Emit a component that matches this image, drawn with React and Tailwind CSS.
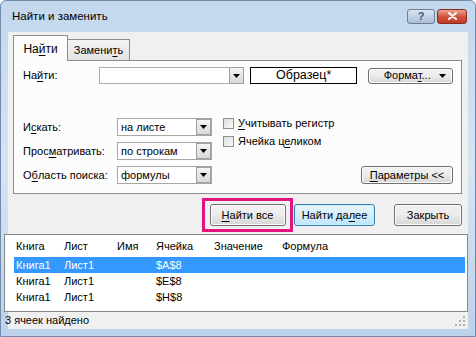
import React from "react";

const F = { fontFamily: '"Liberation Sans", Arial, sans-serif' };

function U({ children }) {
  return <span className="underline underline-offset-2">{children}</span>;
}

function Arrow() {
  return (
    <svg width="7" height="4" viewBox="0 0 7 4">
      <path d="M0 0 H7 L3.5 4 Z" fill="#000" />
    </svg>
  );
}

function DropBtn({ className }) {
  return (
    <div
      className={
        "flex items-center justify-center border border-[#a0a0a0] bg-gradient-to-b from-[#f4f4f4] to-[#d8d8d8] " +
        className
      }
    >
      <Arrow />
    </div>
  );
}

function Select({ value }) {
  return (
    <div className="flex h-[18px] w-[95px] border border-[#a7a7a7] bg-white">
      <div className="flex flex-1 items-center pl-[3px] text-[11px] leading-none text-black">{value}</div>
      <DropBtn className="w-[15px] h-full" />
    </div>
  );
}

function Check({ children }) {
  return (
    <div className="flex items-center gap-[4px] whitespace-nowrap text-[11px] leading-none">
      <div className="h-[11px] w-[11px] border border-[#8e8f8f] bg-gradient-to-br from-[#dcdcdc] to-[#fafafa]" />
      <span>{children}</span>
    </div>
  );
}

function Btn({ children, className = "", def = false }) {
  return (
    <div
      className={
        "flex items-center justify-center whitespace-nowrap rounded-[3px] border text-[11px] leading-none text-black " +
        (def
          ? "border-[#3c7fb1] bg-gradient-to-b from-[#eaf6fd] to-[#bee6fd] shadow-[inset_0_0_0_1px_#c8f0ff]"
          : "border-[#707070] bg-gradient-to-b from-[#f2f2f2] via-[#ebebeb] to-[#d6d6d6] shadow-[inset_0_0_0_1px_#fcfcfc]") +
        " " +
        className
      }
    >
      {children}
    </div>
  );
}

export default function App() {
  const rows = [
    ["Книга1", "Лист1", "$A$8", true],
    ["Книга1", "Лист1", "$E$8", false],
    ["Книга1", "Лист1", "$H$8", false],
  ];
  return (
    <div
      style={F}
      className="flex h-[337px] w-[476px] flex-col overflow-hidden whitespace-nowrap rounded-t-[6px] border border-[#6f8cad] bg-gradient-to-b from-[#c3d7ed] via-[#d6e4f3] to-[#bcd2ea] text-black"
    >
      {/* Title bar */}
      <div className="flex h-[31px] shrink-0 items-center justify-between pl-[11px] pr-[8px]">
        <span className="text-[11.5px] text-black">Найти и заменить</span>
        <div className="flex items-center gap-[2px] pb-[1px]">
          <div className="flex h-[15px] w-[28px] items-center justify-center rounded-[3px] border border-[#6e7f95] bg-gradient-to-b from-[#dbe6f2] to-[#a9bed6] text-[11px] font-bold leading-none text-[#3b5a82]">
            ?
          </div>
          <div className="flex h-[15px] w-[30px] items-center justify-center rounded-[3px] border border-[#8b2b24] bg-gradient-to-b from-[#e8a493] via-[#d3543b] to-[#c13a24]">
            <svg width="9" height="8" viewBox="0 0 9 8">
              <path d="M1 1 L8 7 M8 1 L1 7" stroke="#fff" strokeWidth="2" strokeLinecap="round" />
            </svg>
          </div>
        </div>
      </div>

      {/* Client */}
      <div className="mx-[7px] flex flex-1 flex-col bg-[#f0f0f0]">
        {/* Tabs */}
        <div className="relative mt-[2px] flex h-[26px] items-end pl-[5px]">
          <div className="relative z-10 -mb-[1px] flex h-[26px] w-[55px] items-center justify-center border border-b-0 border-[#898c95] bg-[#fcfcfc] text-[12px]">
            На<U>й</U>ти
          </div>
          <div className="flex h-[21px] w-[62px] items-center justify-center border border-b-0 border-l-0 border-[#898c95] bg-gradient-to-b from-[#f3f3f3] to-[#e3e3e3] text-[11px]">
            Замени<U>т</U>ь
          </div>
        </div>
        {/* Panel */}
        <div className="ml-[5px] mr-[6px] flex h-[134px] flex-col border border-[#898c95] bg-[#fcfcfc] pl-[9px] pr-[8px]">
          <div className="mt-[6px] flex h-[17px] items-center">
            <span className="w-[76px] text-[11px]">
              На<U>й</U>ти:
            </span>
            <div className="flex h-[17px] w-[146px] border border-[#abadb3] bg-white">
              <div className="flex-1" />
              <DropBtn className="w-[15px] -my-[1px] -mr-[1px] h-[17px]" />
            </div>
            <div className="ml-[6px] flex h-[17px] w-[108px] items-center justify-center border border-black bg-white text-[12.5px] leading-none">
              Образец*
            </div>
            <Btn className="ml-[11px] h-[16px] w-[85px] gap-[8px] pl-[8px] text-[10.5px]">
              <span>
                Форма<U>т</U>...
              </span>
              <Arrow />
            </Btn>
          </div>
          <div className="mt-[34px] flex">
            <div className="flex w-[94px] flex-col gap-[6px] text-[11px]">
              <div className="flex h-[18px] items-center">
                И<U>с</U>кать:
              </div>
              <div className="flex h-[18px] items-center">
                Прос<U>м</U>атривать:
              </div>
              <div className="flex h-[18px] items-center">
                О<U>б</U>ласть поиска:
              </div>
            </div>
            <div className="flex flex-col gap-[6px]">
              <Select value="на листе" />
              <Select value="по строкам" />
              <Select value="формулы" />
            </div>
            <div className="ml-[11px] flex flex-1 flex-col">
              <div className="flex flex-col gap-[7px]">
                <Check>
                  <U>У</U>читывать регистр
                </Check>
                <Check>
                  Ячейка ц<U>е</U>ликом
                </Check>
              </div>
              <div className="mt-auto flex justify-end">
                <Btn className="h-[18px] w-[92px]">
                  <U>П</U>араметры &lt;&lt;
                </Btn>
              </div>
            </div>
          </div>
        </div>

        {/* Action buttons */}
        <div className="mt-[4px] flex h-[34px] items-center">
          <div className="ml-[194px] flex h-[34px] w-[91px] items-center justify-center border-[3px] border-[#e0157f]">
            <Btn className="h-[22px] w-[76px]">
              <U>Н</U>айти все
            </Btn>
          </div>
          <Btn def className="ml-[1px] h-[22px] w-[81px]">
            Найти да<U>л</U>ее
          </Btn>
          <Btn className="ml-[19px] h-[22px] w-[68px]">Закрыть</Btn>
        </div>

        {/* Results list */}
        <div className="-ml-[4px] mr-[0px] mt-[2px] flex h-[78px] flex-col border border-[#828790] bg-white text-[11px]">
          <div className="flex h-[22px] items-center pl-[11px]">
            <span className="w-[48px]">Книга</span>
            <span className="w-[53px]">Лист</span>
            <span className="w-[39px]">Имя</span>
            <span className="w-[58px]">Ячейка</span>
            <span className="w-[68px]">Значение</span>
            <span>Формула</span>
          </div>
          {rows.map((r, i) => (
            <div
              key={i}
              className={
                "ml-[9px] mr-[2px] flex h-[16px] items-center pl-[2px] leading-none " +
                (r[3] ? "bg-[#3399ff] text-white" : "")
              }
            >
              <span className="w-[48px]">{r[0]}</span>
              <span className="w-[92px]">{r[1]}</span>
              <span>{r[2]}</span>
            </div>
          ))}
        </div>

        {/* Status */}
        <div className="-ml-[4px] flex flex-1 items-center justify-between pr-[3px] text-[11px]">
          <span className="pl-[1px]">3 ячеек найдено</span>
          <svg width="10" height="10" viewBox="0 0 10 10">
            <g fill="#b0b0b0">
              <rect x="8" y="0" width="2" height="2" />
              <rect x="4" y="4" width="2" height="2" />
              <rect x="8" y="4" width="2" height="2" />
              <rect x="0" y="8" width="2" height="2" />
              <rect x="4" y="8" width="2" height="2" />
              <rect x="8" y="8" width="2" height="2" />
            </g>
          </svg>
        </div>
      </div>
      <div className="h-[7px] shrink-0" />
    </div>
  );
}
